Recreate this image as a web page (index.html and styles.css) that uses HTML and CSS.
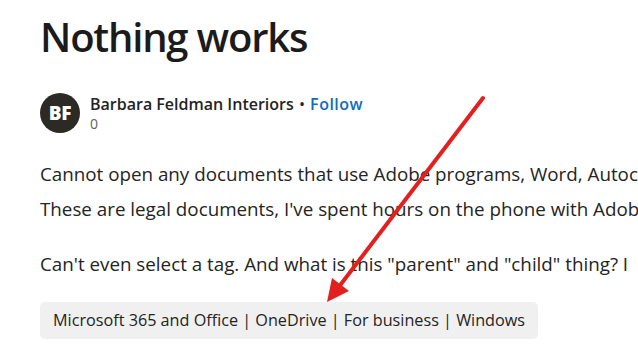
FILE: index.html
```html
<!DOCTYPE html>
<html lang="en">
<head>
<meta charset="utf-8">
<title>Nothing works</title>
<link rel="stylesheet" href="styles.css">
</head>
<body>
<main class="post">
  <h1 class="title">Nothing works</h1>
  <div class="author">
    <div class="avatar">BF</div>
    <div class="author-info">
      <div class="author-line"><span class="author-name">Barbara Feldman Interiors</span> <span class="dot">•</span> <a class="follow" href="#">Follow</a></div>
      <div class="author-count">0</div>
    </div>
  </div>
  <div class="body">
    <p class="para">Cannot open any documents that use Adobe programs, Word, Autocad<br>These are legal documents, I've spent hours on the phone with Adobe</p>
    <p class="para">Can't even select a tag. And what is this "parent" and "child" thing? I</p>
  </div>
  <div class="tags"><span class="tag">Microsoft 365 and Office | OneDrive | For business | Windows</span></div>
</main>
<svg class="arrow" width="638" height="363" viewBox="0 0 638 363" aria-hidden="true">
  <line x1="483" y1="98" x2="338" y2="288" stroke="#e3201f" stroke-width="4" stroke-linecap="round"/>
  <polygon points="327,302 332,278 349,291" fill="#e3201f"/>
</svg>
</body>
</html>
```

FILE: styles.css
```css
html, body {
  margin: 0;
  padding: 0;
  background: #ffffff;
  overflow: hidden;
}
body {
  width: 638px;
  height: 363px;
  position: relative;
  font-family: "Open Sans", "Noto Sans", sans-serif;
  color: #242424;
}
.post {
  padding: 11px 0 0 40px;
}
.title {
  margin: 0;
  font-size: 40px;
  line-height: 52px;
  font-weight: 600;
  color: #1b1b1b;
  letter-spacing: -1.2px;
}
.author {
  display: flex;
  align-items: center;
  gap: 10px;
  margin-top: 30px;
}
.avatar {
  width: 40px;
  height: 40px;
  border-radius: 50%;
  background: #2b2a25;
  color: #ffffff;
  font-weight: 800;
  font-size: 19px;
  display: flex;
  align-items: center;
  justify-content: center;
  letter-spacing: -0.3px;
}
.author-info {
  display: flex;
  flex-direction: column;
}
.author-line {
  font-size: 16px;
  line-height: 22px;
  white-space: nowrap;
}
.author-name {
  font-weight: 600;
  color: #242424;
}
.dot {
  color: #242424;
  margin: 0 1px;
}
.follow {
  color: #0f6cbd;
  font-weight: 600;
  text-decoration: none;
  letter-spacing: 0.5px;
}
.author-count {
  font-size: 14px;
  line-height: 18px;
  color: #616161;
}
.body {
  margin-top: 24px;
}
.para {
  margin: 0 0 20px 0;
  font-size: 18.8px;
  line-height: 35px;
  white-space: nowrap;
}
.tags {
  margin-top: 9px;
  display: flex;
}
.tag {
  background: #f0f0f0;
  border-radius: 5px;
  padding: 0 13px;
  font-size: 16.2px;
  line-height: 37px;
  color: #242424;
  white-space: nowrap;
}
.arrow {
  position: absolute;
  left: 0;
  top: 0;
  pointer-events: none;
}
```
